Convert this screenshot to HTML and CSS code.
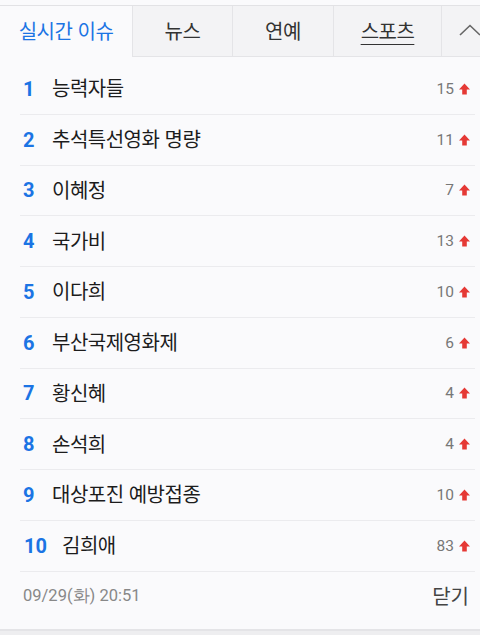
FILE: index.html
```html
<!DOCTYPE html>
<html lang="ko">
<head>
<meta charset="utf-8">
<link rel="stylesheet" href="styles.css">
</head>
<body>
<div class="panel">
  <div class="topline"></div>
  <nav class="tabs">
    <div class="tab active">실시간 이슈</div>
    <div class="tab">뉴스</div>
    <div class="tab">연예</div>
    <div class="tab"><span class="ul">스포츠</span></div>
    <div class="tab more"><svg width="22" height="12" viewBox="0 0 22 12"><path d="M1 11 L11 1.5 L21 11" fill="none" stroke="#666" stroke-width="1.6"/></svg></div>
  </nav>
  <ol class="list">
    <li class="row"><span class="rank">1</span><span class="name">능력자들</span><span class="cnt">15</span><svg class="up" viewBox="0 0 12 12"><path d="M6 0 L12 6.5 L8.5 6.5 L8.5 12 L3.5 12 L3.5 6.5 L0 6.5 Z"/></svg></li>
    <li class="row"><span class="rank">2</span><span class="name">추석특선영화 명량</span><span class="cnt">11</span><svg class="up" viewBox="0 0 12 12"><path d="M6 0 L12 6.5 L8.5 6.5 L8.5 12 L3.5 12 L3.5 6.5 L0 6.5 Z"/></svg></li>
    <li class="row"><span class="rank">3</span><span class="name">이혜정</span><span class="cnt">7</span><svg class="up" viewBox="0 0 12 12"><path d="M6 0 L12 6.5 L8.5 6.5 L8.5 12 L3.5 12 L3.5 6.5 L0 6.5 Z"/></svg></li>
    <li class="row"><span class="rank">4</span><span class="name">국가비</span><span class="cnt">13</span><svg class="up" viewBox="0 0 12 12"><path d="M6 0 L12 6.5 L8.5 6.5 L8.5 12 L3.5 12 L3.5 6.5 L0 6.5 Z"/></svg></li>
    <li class="row"><span class="rank">5</span><span class="name">이다희</span><span class="cnt">10</span><svg class="up" viewBox="0 0 12 12"><path d="M6 0 L12 6.5 L8.5 6.5 L8.5 12 L3.5 12 L3.5 6.5 L0 6.5 Z"/></svg></li>
    <li class="row"><span class="rank">6</span><span class="name">부산국제영화제</span><span class="cnt">6</span><svg class="up" viewBox="0 0 12 12"><path d="M6 0 L12 6.5 L8.5 6.5 L8.5 12 L3.5 12 L3.5 6.5 L0 6.5 Z"/></svg></li>
    <li class="row"><span class="rank">7</span><span class="name">황신혜</span><span class="cnt">4</span><svg class="up" viewBox="0 0 12 12"><path d="M6 0 L12 6.5 L8.5 6.5 L8.5 12 L3.5 12 L3.5 6.5 L0 6.5 Z"/></svg></li>
    <li class="row"><span class="rank">8</span><span class="name">손석희</span><span class="cnt">4</span><svg class="up" viewBox="0 0 12 12"><path d="M6 0 L12 6.5 L8.5 6.5 L8.5 12 L3.5 12 L3.5 6.5 L0 6.5 Z"/></svg></li>
    <li class="row"><span class="rank">9</span><span class="name">대상포진 예방접종</span><span class="cnt">10</span><svg class="up" viewBox="0 0 12 12"><path d="M6 0 L12 6.5 L8.5 6.5 L8.5 12 L3.5 12 L3.5 6.5 L0 6.5 Z"/></svg></li>
    <li class="row"><span class="rank wide">10</span><span class="name">김희애</span><span class="cnt">83</span><svg class="up" viewBox="0 0 12 12"><path d="M6 0 L12 6.5 L8.5 6.5 L8.5 12 L3.5 12 L3.5 6.5 L0 6.5 Z"/></svg></li>
  </ol>
  <footer class="foot">
    <span class="time">09/29(화) 20:51</span>
    <span class="close">닫기</span>
  </footer>
</div>
</body>
</html>
```
FILE: styles.css
```css
html, body {
  margin: 0;
  padding: 0;
  background: #eeeef0;
}
body {
  font-family: "Noto Sans CJK KR", "Noto Sans", sans-serif;
}
.panel {
  width: 480px;
  background: #fafafc;
  overflow: hidden;
  border-bottom: 2px solid #e4e4e7;
}
.topline {
  height: 5px;
  border-bottom: 1px solid #e2e2e5;
  background: #fafafc;
}
.tabs {
  display: grid;
  grid-template-columns: 132px 100px 101px 108px 60px;
  width: 501px;
  height: 51px;
}
.tab {
  display: flex;
  align-items: center;
  justify-content: center;
  font-size: 20px;
  letter-spacing: -0.5px;
  color: #333;
  background: #f3f3f5;
  border-left: 1px solid #e4e4e7;
  border-bottom: 1px solid #e4e4e7;
  padding-bottom: 2px;
}
.tab.active {
  background: #fafafc;
  color: #1b74e4;
  border-left: none;
  border-bottom: none;
}
.ul {
  text-decoration: underline;
  text-underline-offset: 5px;
  text-decoration-thickness: 1px;
}
.tab.more {
  justify-content: flex-start;
  padding-left: 17px;
}
.list {
  list-style: none;
  margin: 7px 5px 0 20px;
  padding: 0;
}
.row {
  display: flex;
  align-items: center;
  height: 49.75px;
  border-bottom: 1px solid #ebebee;
}
.rank {
  font-family: Roboto, "Liberation Sans", sans-serif;
  font-weight: 700;
  font-size: 20px;
  color: #1b74e4;
  width: 29px;
  padding-left: 3px;
}
.rank.wide {
  width: 38px;
  padding-left: 4px;
}
.name {
  flex: 1;
  font-size: 20px;
  letter-spacing: -0.5px;
  color: #1c1c1c;
  padding-bottom: 2px;
}
.cnt {
  font-family: Roboto, "Liberation Sans", sans-serif;
  font-size: 15.5px;
  color: #777;
}
.up {
  width: 11px;
  height: 12px;
  fill: #e53935;
  margin: 0 5px 0 5px;
}
.foot {
  display: flex;
  align-items: center;
  justify-content: space-between;
  height: 57px;
  padding: 0 11px 0 23px;
}
.time {
  font-family: Roboto, "Liberation Sans", sans-serif;
  font-size: 16.5px;
  color: #888;
  padding-bottom: 8px;
}
.close {
  font-size: 20px;
  color: #444;
  padding-bottom: 10px;
}
```
